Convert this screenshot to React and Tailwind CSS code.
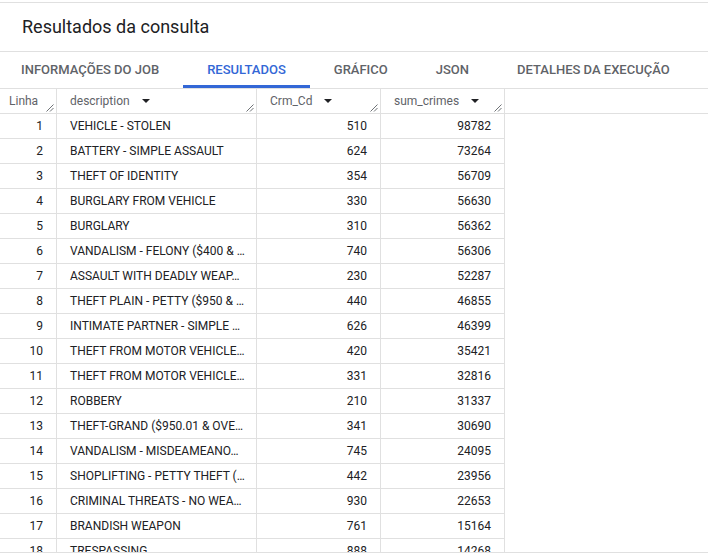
const tabs = ['INFORMAÇÕES DO JOB', 'RESULTADOS', 'GRÁFICO', 'JSON', 'DETALHES DA EXECUÇÃO'];

const rows = [
  ['VEHICLE - STOLEN', 510, 98782],
  ['BATTERY - SIMPLE ASSAULT', 624, 73264],
  ['THEFT OF IDENTITY', 354, 56709],
  ['BURGLARY FROM VEHICLE', 330, 56630],
  ['BURGLARY', 310, 56362],
  ['VANDALISM - FELONY ($400 & …', 740, 56306],
  ['ASSAULT WITH DEADLY WEAP…', 230, 52287],
  ['THEFT PLAIN - PETTY ($950 & …', 440, 46855],
  ['INTIMATE PARTNER - SIMPLE …', 626, 46399],
  ['THEFT FROM MOTOR VEHICLE…', 420, 35421],
  ['THEFT FROM MOTOR VEHICLE…', 331, 32816],
  ['ROBBERY', 210, 31337],
  ['THEFT-GRAND ($950.01 & OVE…', 341, 30690],
  ['VANDALISM - MISDEAMEANO…', 745, 24095],
  ['SHOPLIFTING - PETTY THEFT (…', 442, 23956],
  ['CRIMINAL THREATS - NO WEA…', 930, 22653],
  ['BRANDISH WEAPON', 761, 15164],
  ['TRESPASSING', 888, 14268],
];

function Grip() {
  return (
    <svg className="absolute right-[2px] bottom-[1px]" width="8" height="8" viewBox="0 0 8 8">
      <path d="M7.5 0.5 L0.5 7.5 M7.5 4 L4 7.5" stroke="#5f6368" strokeWidth="0.9" fill="none" />
    </svg>
  );
}

function SortArrow() {
  return (
    <svg className="ml-3" width="8" height="4" viewBox="0 0 8 4">
      <polygon points="0,0 8,0 4,4" fill="#202124" />
    </svg>
  );
}

function HeadCell({ label, sort, className }) {
  return (
    <div className={`relative flex items-center border-r border-[#e0e0e0] ${className}`}>
      <span>{label}</span>
      {sort && <SortArrow />}
      <Grip />
    </div>
  );
}

export default function App() {
  return (
    <div className="w-[708px] h-[555px] bg-white pt-[2px] overflow-hidden text-[#202124]" style={{ fontFamily: 'Roboto, "Liberation Sans", sans-serif' }}>
      {/* Title */}
      <div className="h-[50px] flex items-center pl-[22px] border-y border-[#e0e0e0]">
        <h1 className="text-[18px] leading-none">Resultados da consulta</h1>
      </div>

      {/* Tabs */}
      <div className="flex h-[37px] border-b border-[#e0e0e0]">
        {tabs.map((t, i) => (
          <div
            key={t}
            className={`relative flex items-center text-[13px] font-medium ${i === 0 ? 'pl-[21px] pr-6' : 'px-6'} ${i === 1 ? 'text-[#3367d6]' : 'text-[#5f6368]'}`}
          >
            {t}
            {i === 1 && <span className="absolute left-0 right-0 bottom-0 h-[3px] bg-[#3367d6]" />}
          </div>
        ))}
      </div>

      {/* Table */}
      <div className="h-[464px] overflow-hidden border-b border-[#e0e0e0] text-[12px]">
        <div className="grid grid-cols-[57px_200px_124px_124px_1fr] h-[25px] border-b border-[#e0e0e0] text-[#5f6368]">
          <HeadCell label="Linha" className="pl-[9px]" />
          <HeadCell label="description" sort className="pl-[13px]" />
          <HeadCell label="Crm_Cd" sort className="pl-[13px]" />
          <HeadCell label="sum_crimes" sort className="pl-[13px]" />
          <div />
        </div>
        {rows.map(([desc, cd, sum], i) => (
          <div key={i} className="grid grid-cols-[57px_200px_124px_124px] w-[505px] h-[25px] border-b border-[#e0e0e0]">
            <div className="flex items-center justify-end pr-[13px] border-r border-[#e0e0e0]">{i + 1}</div>
            <div className="flex items-center pl-[13px] border-r border-[#e0e0e0] whitespace-nowrap overflow-hidden">{desc}</div>
            <div className="flex items-center justify-end pr-[13px] border-r border-[#e0e0e0]">{cd}</div>
            <div className="flex items-center justify-end pr-[13px] border-r border-[#e0e0e0]">{sum}</div>
          </div>
        ))}
      </div>
    </div>
  );
}
